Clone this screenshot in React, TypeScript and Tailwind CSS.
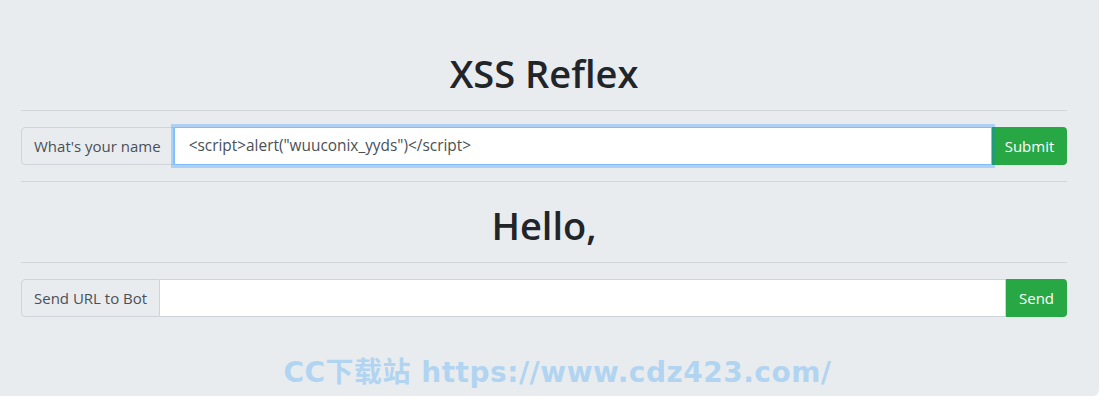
export default function App() {
  const font = { fontFamily: '"Open Sans", "Noto Sans", sans-serif' };
  return (
    <div className="w-[1116px] h-[404px] bg-white">
      <div
        className="w-[1099px] h-[396px] bg-[#e9ecef] rounded-br-[6px] pl-[21px] pr-[32px] pt-[49px] flex flex-col text-[#212529]"
        style={font}
      >
        <h1 className="h-[48px] leading-[48px] text-[38px] font-semibold text-center text-[#212529]">XSS Reflex</h1>
        <hr className="mt-[13px] border-t border-[#d2d5d8]" />

        <div className="mt-[16px] flex h-[38px]">
          <span className="flex items-center px-[12px] bg-[#e9ecef] border border-[#ced4da] rounded-l-[4px] text-[15px] text-[#495057] whitespace-nowrap">
            What's your name
          </span>
          <input
            className="flex-1 min-w-0 bg-white border border-[#80bdff] shadow-[0_0_0_3px_rgba(0,123,255,0.25)] px-[14px] text-[15.4px] text-[#495057] outline-none relative z-10"
            defaultValue={'<script>alert("wuuconix_yyds")</script>'}
            style={font}
          />
          <button className="w-[75px] bg-[#28a745] text-white text-[15px] rounded-r-[4px]" style={font}>
            Submit
          </button>
        </div>

        <hr className="mt-[16px] border-t border-[#d2d5d8]" />
        <h1 className="mt-[19px] h-[48px] leading-[48px] text-[38px] font-semibold text-center text-[#212529]">Hello,</h1>
        <hr className="mt-[13px] border-t border-[#d2d5d8]" />

        <div className="mt-[16px] flex h-[38px]">
          <span className="flex items-center px-[12px] bg-[#e9ecef] border border-[#ced4da] rounded-l-[4px] text-[15px] text-[#495057] whitespace-nowrap">
            Send URL to Bot
          </span>
          <input
            className="flex-1 min-w-0 bg-white border border-l-0 border-[#ced4da] px-[12px] text-[15px] outline-none"
            style={font}
          />
          <button className="w-[61px] bg-[#28a745] text-white text-[15px] rounded-r-[4px]" style={font}>
            Send
          </button>
        </div>

        <div
          className="mt-[38px] pl-[27px] text-center text-[28px] font-bold leading-[36px] text-[#b1d4f1] tracking-[0.5px]"
          style={{ fontFamily: '"DejaVu Sans", "Noto Sans CJK SC", sans-serif' }}
        >
          CC下载站 https://www.cdz423.com/
        </div>
      </div>
    </div>
  );
}
